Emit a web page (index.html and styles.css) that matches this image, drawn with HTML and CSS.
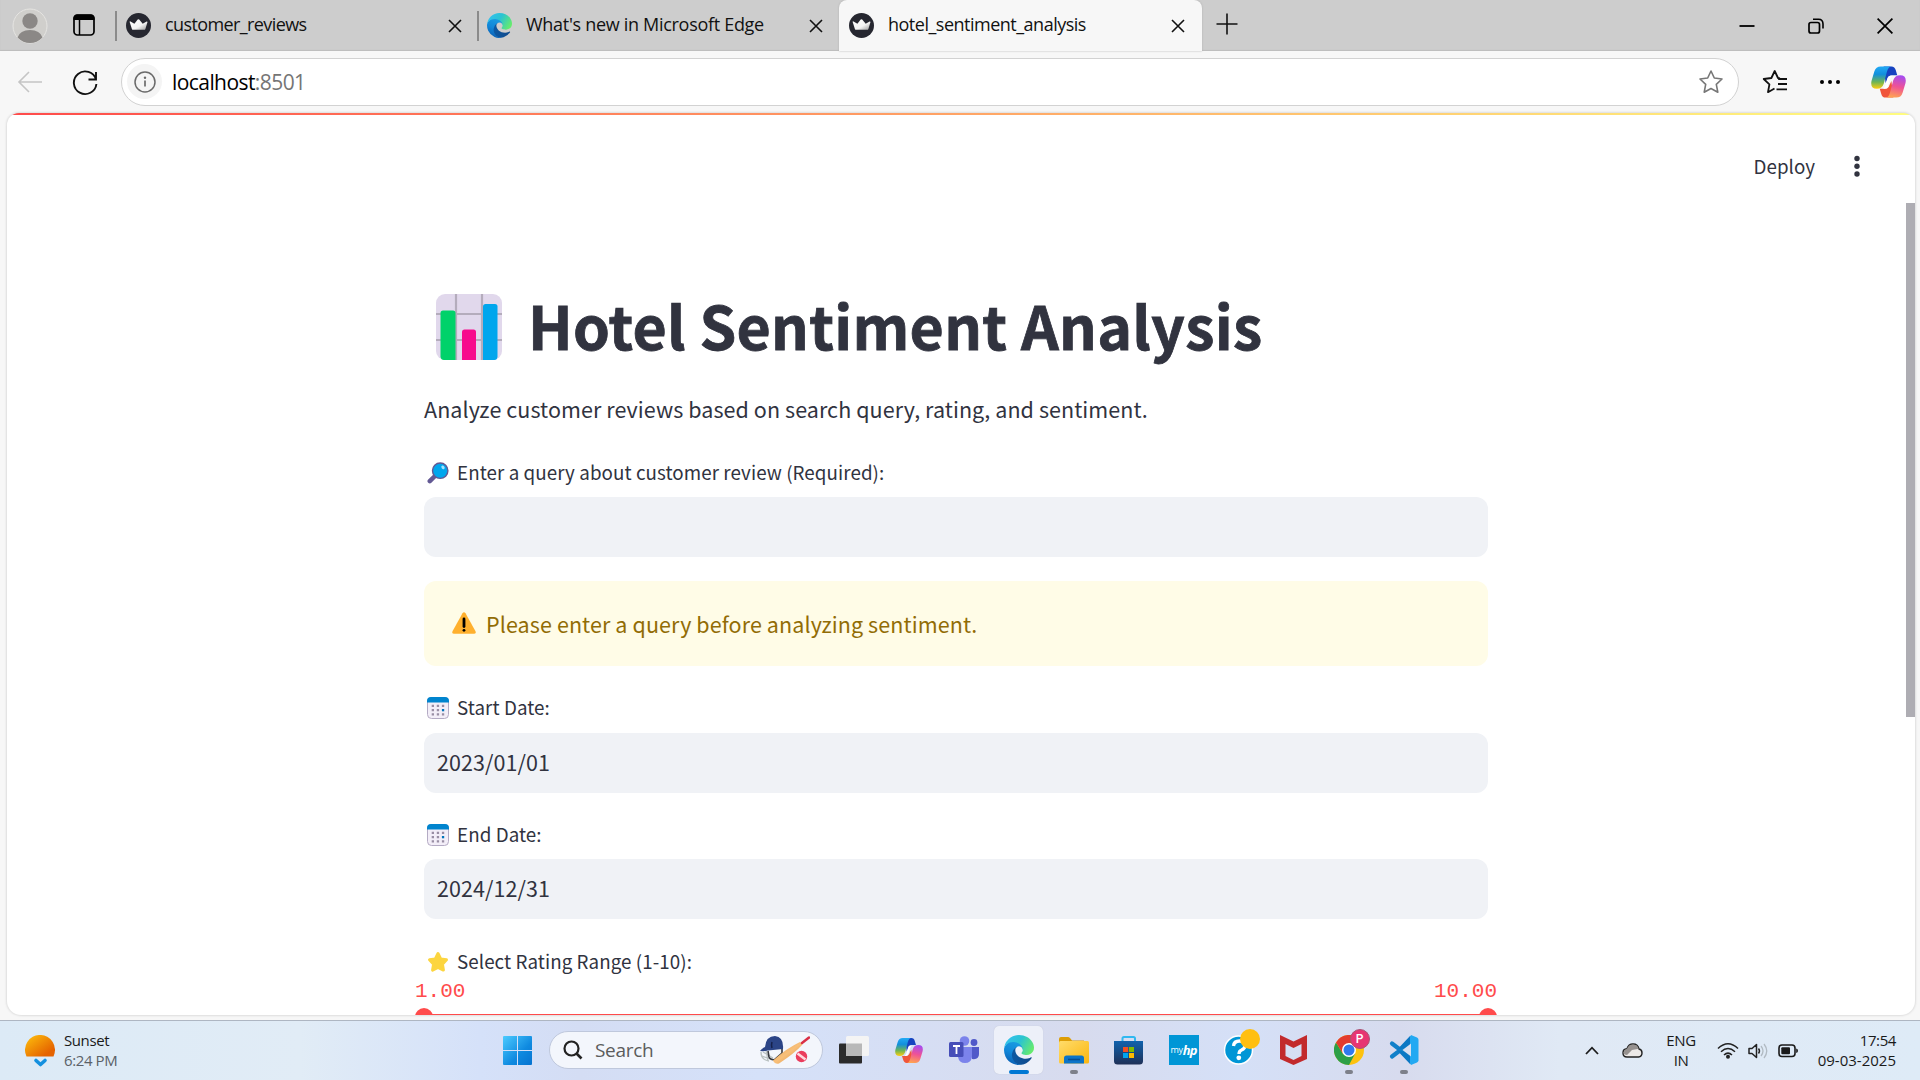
FILE: index.html
```html
<!DOCTYPE html>
<html lang="en">
<head>
<meta charset="utf-8">
<title>hotel_sentiment_analysis</title>
<link rel="stylesheet" href="styles.css">
</head>
<body>
<svg class="defs" width="0" height="0" aria-hidden="true">
  <defs>
    <linearGradient id="edgeDark" x1="0" y1="0" x2="1" y2="0"><stop offset="0" stop-color="#0c59a4"/><stop offset="1" stop-color="#114a8b"/></linearGradient>
    <linearGradient id="edgeBlue" x1=".6" y1="0" x2=".3" y2="1"><stop offset="0" stop-color="#1b9de2"/><stop offset=".5" stop-color="#1187d9"/><stop offset="1" stop-color="#0b5cb0"/></linearGradient>
    <linearGradient id="edgeGreen" x1="0" y1=".2" x2="1" y2=".6"><stop offset="0" stop-color="#35c1f1"/><stop offset=".5" stop-color="#2bc3d2"/><stop offset="1" stop-color="#66eb6e"/></linearGradient>
    <linearGradient id="copLeft" x1="0" y1="0" x2="0" y2="1"><stop offset="0" stop-color="#22aaf5"/><stop offset=".35" stop-color="#128fdc"/><stop offset=".7" stop-color="#6fb553"/><stop offset="1" stop-color="#ffcd0f"/></linearGradient>
    <linearGradient id="copRight" x1=".6" y1="0" x2=".4" y2="1"><stop offset="0" stop-color="#a64cf0"/><stop offset=".5" stop-color="#ef5296"/><stop offset="1" stop-color="#ffa352"/></linearGradient>
    <linearGradient id="crown" x1="0" y1="0" x2="1" y2="1"><stop offset="0" stop-color="#fff"/><stop offset=".6" stop-color="#f4f4f4"/><stop offset="1" stop-color="#999"/></linearGradient>
    <linearGradient id="sun" x1="0" y1="0" x2="1" y2="1"><stop offset=".1" stop-color="#fbb70b"/><stop offset=".8" stop-color="#e56300"/></linearGradient>
    <linearGradient id="win" x1="0" y1="0" x2="1" y2="1"><stop offset="0" stop-color="#4ccbff"/><stop offset=".6" stop-color="#0f8ae0"/><stop offset="1" stop-color="#0673d0"/></linearGradient>
    <linearGradient id="folder" x1="0" y1="0" x2="1" y2="1"><stop offset="0" stop-color="#ffdc6b"/><stop offset="1" stop-color="#fbb60f"/></linearGradient>
    <linearGradient id="store" x1="0" y1="0" x2="0" y2="1"><stop offset="0" stop-color="#0f62ad"/><stop offset="1" stop-color="#1f3057"/></linearGradient>
    <linearGradient id="bat" x1="0" y1="0" x2="1" y2="1"><stop offset="0" stop-color="#e09a50"/><stop offset=".5" stop-color="#f8c07a"/><stop offset="1" stop-color="#d88b40"/></linearGradient>
    <symbol id="edge" viewBox="0 0 256 256">
      <path fill="url(#edgeDark)" d="M231 190.500c-3.400 1.800-6.900 3.400-10.500 4.700a101.800 101.800 0 0 1-35.900 6.400c-47.300 0-88.500-32.500-88.500-74.300a31.500 31.500 0 0 1 16.400-27.300c-42.800 1.800-53.800 46.400-53.800 72.500 0 74 68.100 81.400 82.800 81.400 7.900 0 19.800-2.300 27-4.600l1.300-.4a128.300 128.300 0 0 0 66.600-52.800 4 4 0 0 0-5.400-5.600z"/>
      <path fill="url(#edgeBlue)" d="M105.700 241.400a79.200 79.200 0 0 1-22.700-21.300 80.700 80.700 0 0 1 29.500-120c3.100-1.500 8.500-4.100 15.600-4a32.400 32.400 0 0 1 25.700 13 31.900 31.900 0 0 1 6.300 18.700c0-.2 24.500-79.600-80-79.600-43.900 0-80 41.600-80 78.200a130.200 130.200 0 0 0 12.100 56 128 128 0 0 0 156.400 67 75.500 75.500 0 0 1-62.800-8z"/>
      <path fill="url(#edgeGreen)" d="M152.300 148.900c-.9 1-3.400 2.500-3.400 5.600 0 2.600 1.700 5.200 4.800 7.300 14.300 10 41.400 8.600 41.500 8.600 10.700 0 21.100-2.900 30.300-8.300A61.400 61.400 0 0 0 256 109.300c.2-22.400-8-37.300-11.300-43.900C223.500 24 177.700.1 128 .1A128 128 0 0 0 0 126.400c.5-36.500 36.800-66 80-66 3.500 0 23.500.3 42 10 16.300 8.600 24.900 19 30.800 29.200 6.200 10.700 7.300 24.100 7.300 29.500 0 5.300-2.700 13.300-7.800 19.900z"/>
    </symbol>
    <symbol id="copilot" viewBox="0 0 36 32">
      <path fill="#1643c0" d="M13 0h8q3.500 0 4.500 4l1.500 5h-5q-4 0-5 4l-2 4z"/>
      <path fill="#f0553a" d="M23 32h-8q-3.500 0-4.500-4L9 23h5q4 0 5-4l2-4z"/>
      <path fill="url(#copLeft)" d="M10 0h11q-3 0-4.500 5l-3.300 12.500Q11.500 23 6 23q-7 0-5.500-8L3.500 5Q5 0 10 0z"/>
      <path fill="url(#copRight)" d="M26 32H15q3 0 4.500-5l3.300-12.500Q24.500 9 30 9q7 0 5.500 8l-3 10Q31 32 26 32z"/>
      <path fill="#fff" d="M19.500 9.500H22q-2 1.500-3 5l-1.700 6q-.8 2.500-3.300 2.500h-1.500q1.800-1.500 2.700-5l1.500-5.500q.8-3 2.800-3z"/>
    </symbol>
    <symbol id="streamlit" viewBox="0 0 25 25">
      <circle cx="12.500" cy="12.500" r="12.500" fill="#262730"/>
      <path fill="url(#crown)" d="M3.600 8.800q.1-.7.900-.3l3.900 2.300 3.300-4.200q.8-.7 1.500 0l3.500 4.200 3.900-2.300q.8-.3.900.4l-2.100 7q-.3.900-1.200.9H7.100q-.9 0-1.200-.9z"/>
    </symbol>
    <symbol id="cross" viewBox="0 0 14 14"><path d="M1 1l12 12M13 1L1 13" fill="none" stroke="#111" stroke-width="1.600"/></symbol>
    <symbol id="calendar" viewBox="0 0 22 22">
      <rect x=".5" y=".5" width="21" height="21" rx="4" fill="#f3eef8" stroke="#b4abc4"/>
      <path d="M0 5.500V4q0-4 4-4h14q4 0 4 4v1.500z" fill="#0084ce"/>
      <g fill="#998ea4"><path d="M4.700 7.800h2.300v2.300H4.700zM9.800 7.800h2.300v2.300H9.800zM14.900 7.800h2.300v2.300h-2.300zM4.700 12h2.300v2.300H4.700zM9.800 12h2.300v2.300H9.800zM4.700 16.200h2.300v2.300H4.700zM9.800 16.200h2.300v2.300H9.800zM14.900 16.200h2.300v2.300h-2.300z"/></g>
      <path d="M14.900 12h2.300v2.300h-2.300z" fill="#0074ba"/>
    </symbol>
  </defs>
</svg>

<header class="tabs">
  <div class="tools">
    <svg width="36" height="36" viewBox="0 0 36 36"><circle cx="18" cy="18" r="17" fill="#d0cfcc" stroke="#e6e5e2"/><circle cx="18" cy="13" r="7.700" fill="#8b8886"/><path fill="#8b8886" d="M5.500 29.500Q8 22 18 22t12.500 7.500Q25 35 18 35T5.500 29.500z"/></svg>
    <svg class="spaces" width="24" height="24" viewBox="0 0 24 24"><rect x="2" y="2" width="20" height="20" rx="3.500" fill="none" stroke="#000" stroke-width="1.700"/><path d="M1.500 7V5q0-3.500 3.500-3.500h14q3.500 0 3.500 3.500v2z"/><path d="M7.500 7v15" stroke="#000" stroke-width="1.500"/></svg>
  </div>
  <div class="tab ruled first-tab">
    <svg width="25" height="25"><use href="#streamlit"/></svg>
    <span class="tab-title t1">customer_reviews</span>
    <svg width="14" height="14"><use href="#cross"/></svg>
  </div>
  <div class="tab ruled">
    <svg width="25" height="25"><use href="#edge"/></svg>
    <span class="tab-title t2">What's new in Microsoft Edge</span>
    <svg width="14" height="14"><use href="#cross"/></svg>
  </div>
  <div class="tab active">
    <svg width="25" height="25"><use href="#streamlit"/></svg>
    <span class="tab-title t3">hotel_sentiment_analysis</span>
    <svg width="14" height="14"><use href="#cross"/></svg>
  </div>
  <svg class="plus" width="22" height="22" viewBox="0 0 22 22"><path d="M11 .5v21M.5 11h21" stroke="#111" stroke-width="1.600"/></svg>
  <div class="window-buttons">
    <svg width="16" height="16" viewBox="0 0 16 16"><path d="M.5 8h15" stroke="#000" stroke-width="1.800"/></svg>
    <svg width="16" height="16" viewBox="0 0 16 16"><rect x="1" y="4.500" width="10.500" height="10.500" rx="2" fill="none" stroke="#000" stroke-width="1.700"/><path d="M5 1.200h5.500Q15 1.200 15 6v4.500" fill="none" stroke="#000" stroke-width="1.600"/></svg>
    <svg width="16" height="16" viewBox="0 0 14 14"><path d="M.5.5l13 13M13.500.5l-13 13" stroke="#000" stroke-width="1.500"/></svg>
  </div>
</header>

<nav class="toolbar">
  <svg class="back" width="26" height="24" viewBox="0 0 26 24"><path d="M25 12H2M12 2L2 12l10 10" fill="none" stroke="#c5c5c5" stroke-width="1.600"/></svg>
  <svg class="reload" width="26" height="26" viewBox="0 0 26 26"><path d="M24 9.500A11.300 11.300 0 1 0 24.400 14M24 2v7.500h-7.500" fill="none" stroke="#111" stroke-width="1.900"/></svg>
  <div class="address">
    <span class="info"><svg width="22" height="22" viewBox="0 0 22 22"><circle cx="11" cy="11" r="10" fill="none" stroke="#6a6a6a" stroke-width="1.500"/><path d="M11 9.500v6" stroke="#6a6a6a" stroke-width="1.700"/><circle cx="11" cy="6.700" r="1.200" fill="#6a6a6a"/></svg></span>
    <span class="url">localhost<span class="port">:8501</span></span>
    <svg class="star" width="26" height="26" viewBox="0 0 26 26"><path d="M13 2l3.300 7 7.700 1-5.700 5.300 1.500 7.900L13 19.500l-6.800 3.700 1.500-7.900L2 10l7.700-1z" fill="none" stroke="#777" stroke-width="1.600" stroke-linejoin="round"/></svg>
  </div>
  <svg class="favs" width="26" height="26" viewBox="0 0 26 26"><path d="M18 9.300L16 9l-3.300-7-3.300 7-7.700 1L7.400 15.300 6 23.200l6.500-3.700M16 10h9M16 15h9M14.500 20.300H25" fill="none" stroke="#111" stroke-width="1.800" stroke-linejoin="round"/></svg>
  <svg class="more" width="22" height="6" viewBox="0 0 22 6"><circle cx="3" cy="3" r="2"/><circle cx="11" cy="3" r="2"/><circle cx="19" cy="3" r="2"/></svg>
  <svg class="cop" width="35" height="32"><use href="#copilot"/></svg>
</nav>

<main class="page">
  <div class="app-header">
    <span class="deploy">Deploy</span>
    <svg width="6" height="24" viewBox="0 0 6 24" fill="#31333f"><circle cx="3" cy="4.500" r="2.700"/><circle cx="3" cy="12.200" r="2.700"/><circle cx="3" cy="20" r="2.700"/></svg>
  </div>
  <div class="scroller">
    <div class="content">
      <div class="title-row">
        <svg width="66" height="66" viewBox="0 0 66 66">
          <rect width="66" height="66" rx="9" fill="#e1d8ec"/>
          <path d="M20 0v66M46 0v66M0 20h66M0 46h66" stroke="#b4acbc" stroke-width="2.200"/>
          <path fill="#00d26a" d="M4.500 66V19q0-2.500 2.500-2.500h10q2.500 0 2.500 2.500v47H8q-3 0-3.500-3z"/>
          <path fill="#f70a8d" d="M26 66V38q0-2.500 2.500-2.500h9Q40 35.500 40 38v28z"/>
          <path fill="#00a6ed" d="M47 66V12.500Q47 10 49.500 10h9.500q2.500 0 2.500 2.500V63q-.5 3-3 3z"/>
        </svg>
        <h1>Hotel Sentiment Analysis</h1>
      </div>
      <p class="lead">Analyze customer reviews based on search query, rating, and sentiment.</p>

      <div class="label first">
        <svg width="22" height="22" viewBox="0 0 22 22"><path d="M2.800 19.200L8.500 13.500" stroke="#635994" stroke-width="4.500" stroke-linecap="round"/><circle cx="13.200" cy="8.700" r="7.700" fill="#00a6ed" stroke="#635994" stroke-width="1.400"/><ellipse cx="16" cy="5.400" rx="1.500" ry="2" fill="#a5e4ff" transform="rotate(-35 16 5.400)"/></svg>
        <span>Enter a query about customer review (Required):</span>
      </div>
      <div class="field"></div>

      <div class="alert">
        <svg width="24" height="22" viewBox="0 0 24 22"><path fill="#ffb02e" d="M10.500 1.200Q12-.8 13.500 1.200L23.500 19.300Q24.300 21.700 22 21.700H2Q-.3 21.700.5 19.300z"/><path d="M12 7v7.500" stroke="#000" stroke-width="2.800" stroke-linecap="round"/><circle cx="12" cy="18.300" r="1.400"/></svg>
        <span>Please enter a query before analyzing sentiment.</span>
      </div>

      <div class="label second">
        <svg width="22" height="22"><use href="#calendar"/></svg>
        <span>Start Date:</span>
      </div>
      <div class="field">2023/01/01</div>

      <div class="label third">
        <svg width="22" height="22"><use href="#calendar"/></svg>
        <span>End Date:</span>
      </div>
      <div class="field">2024/12/31</div>

      <div class="label fourth">
        <svg width="22" height="22" viewBox="0 0 22 22"><path d="M11 2.500l2.700 5.400 5.800.9-4.100 4.300 1 6L11 16.500l-5.400 2.600 1-6L2.500 8.800l5.800-.9z" fill="#fcd53f" stroke="#fcd53f" stroke-width="3" stroke-linejoin="round"/></svg>
        <span>Select Rating Range (1-10):</span>
      </div>
      <div class="values"><span>1.00</span><span>10.00</span></div>
      <div class="slider"><i class="thumb"></i><i class="track"></i><i class="thumb"></i></div>
    </div>
    <div class="scrollbar"></div>
  </div>
</main>

<footer class="taskbar">
  <div class="weather">
    <svg width="30" height="32" viewBox="0 0 30 32"><path fill="url(#sun)" d="M1.500 21.500A15 15 0 1 1 28.500 21.500z"/><path d="M11 25.500l4.500 4 4.500-4" fill="none" stroke="#1490df" stroke-width="3.600" stroke-linecap="round" stroke-linejoin="round"/></svg>
    <div class="lines"><span class="w1">Sunset</span><span class="w2">6:24 PM</span></div>
  </div>
  <svg class="start" width="29" height="29" viewBox="0 0 29 29" fill="url(#win)"><path d="M1 0h13v14H0V1q0-1 1-1zM15 0h13q1 0 1 1v13H15zM0 15h14v14H1q-1 0-1-1zM15 15h14v13q0 1-1 1H15z"/></svg>
  <div class="search">
    <svg width="20" height="20" viewBox="0 0 20 20"><circle cx="8.500" cy="8.500" r="7" fill="none" stroke="#222" stroke-width="2.200"/><path d="M13.500 13.500l5 5" stroke="#222" stroke-width="2.600"/></svg>
    <span>Search</span>
    <svg width="50" height="30" viewBox="0 0 50 30">
      <path d="M1 17q0 8 8 9M3 17l10 6M2 21l8 3M6 15l2 11" fill="none" stroke="#b9c1c1" stroke-width="1.300"/>
      <path d="M8 16l1 6q1 3 7 3l4-2M22 13v5l-8 7" fill="none" stroke="#35373d" stroke-width="1.600"/>
      <path d="M0 16Q2 13 5 12Q6 1 15 1q9 1 8 13L8 15.500Q4 16.500 0 16z" fill="#2b4486"/>
      <path d="M12 7q-1 3 0 6" stroke="#16224c" stroke-width="1.500"/>
      <path d="M13 25.500Q27 13 40 7l2.500 2.500Q35 18 19 28.500q-4 1-6-3z" fill="url(#bat)"/>
      <path d="M42 8l7-5.500" stroke="#d92f45" stroke-width="2.500" stroke-linecap="round"/>
      <circle cx="41.500" cy="21.500" r="5.700" fill="#ea3d5d"/><path d="M37.500 18.500l8 6" stroke="#ffd7dc" stroke-width="2.500"/>
    </svg>
  </div>
  <ul class="apps">
    <li><svg width="30" height="28" viewBox="0 0 30 28"><rect y="7.500" width="23" height="20" rx="1" fill="#2b2b2b"/><rect x="7" width="23" height="20" rx="1.500" fill="#f4f4f4"/><path d="M7 7.500h16V20H7z" fill="#b8b8b8"/></svg></li>
    <li><svg width="28" height="25"><use href="#copilot"/></svg></li>
    <li><svg width="30" height="28" viewBox="0 0 30 28">
      <circle cx="15.500" cy="5" r="4.800" fill="#7b83eb"/><circle cx="25" cy="6.500" r="3.400" fill="#5059c9"/><path d="M22 11h8v7q0 6-7 5z" fill="#5059c9"/><path d="M9 11h14v10q-1 6-7 6t-7-6z" fill="#7b83eb"/><rect y="6" width="14.500" height="15" rx="1.500" fill="#464eb8"/><path d="M4 10h7M7.500 10v8" stroke="#fff" stroke-width="1.800"/></svg></li>
    <li class="current"><svg width="30" height="30"><use href="#edge"/></svg><i class="run"></i></li>
    <li><svg width="30" height="27" viewBox="0 0 30 27"><path d="M0 2q0-2 2-2h7q1 0 2 1l2 2.500h12v5H0z" fill="#dd9d05"/><rect y="4" width="30" height="22.500" rx="1.500" fill="url(#folder)"/><path d="M5 26.500V21q0-2.500 2.500-2.500h15Q25 18.500 25 21v5.500z" fill="#0c74c8"/><path d="M9 22.500h12" stroke="#064e93" stroke-width="1.600"/></svg><i class="run"></i></li>
    <li><svg width="29" height="30" viewBox="0 0 29 30"><path d="M8.500 7V3.500Q8.500 2 10 2h9.500Q21 2 21 3.500V7" fill="none" stroke="#30b8f0" stroke-width="2"/><path d="M0 6h29v20q0 3.500-3.500 3.500h-22Q0 29.500 0 26z" fill="url(#store)"/><path d="M9 12h5.200v5H9z" fill="#f25022"/><path d="M15 12h5v5h-5z" fill="#7fba00"/><path d="M9 18h5.200v5H9z" fill="#00a4ef"/><path d="M15 18h5v5h-5z" fill="#ffb900"/></svg></li>
    <li><span class="myhp"><span>my</span><b>hp</b></span></li>
    <li><svg width="30" height="30" viewBox="0 0 30 30"><circle cx="14.500" cy="15" r="14" fill="#0096d6" stroke="#fff" stroke-width="1.500"/><path d="M9.500 11q.5-5 6-5t5.500 4.500q0 3-3.500 4.500-2.500 1-2.500 4" fill="none" stroke="#fff" stroke-width="3.300"/><circle cx="14.800" cy="22.800" r="2.400" fill="#fff"/></svg><i class="badge amber"></i></li>
    <li><svg width="27" height="30" viewBox="0 0 27 30"><path fill="#c22a2c" d="M0 0l13.500 6.500L27 0v24l-13.500 6L0 24zM5.500 9v12l8 4 8-4V9l-8 4z" fill-rule="evenodd"/></svg></li>
    <li><svg width="30" height="30" viewBox="0 0 30 30"><circle cx="15" cy="15" r="15" fill="#fdc20f"/><path d="M2 7.500A15 15 0 0 0 15 30l6.200-11.500L15 15l-6.200 3.500z" fill="#2c9f47"/><path d="M28.300 8A15 15 0 0 0 2 7.500L8.800 18.500 15 8z" fill="#e33b2e"/><circle cx="15" cy="15" r="7" fill="#fff"/><circle cx="15" cy="15" r="5.500" fill="#3079ed"/></svg><i class="badge pink">P</i><i class="run"></i></li>
    <li><svg width="30" height="30" viewBox="0 0 30 30"><path d="M22 7L3 21.500M22 23L3 8.500" stroke="#1180c9" stroke-width="4.200" stroke-linecap="round"/><path d="M8 14.800L21 1l3 2v8zM8 15.200L21 29l3-2v-8z" fill="#0b78c4"/><path d="M22 0l6 2.500q1.500.7 1.500 2.300v20.400q0 1.600-1.500 2.300L22 30l-1-2V2z" fill="#23a9f2"/><path d="M22 8.500v13L13.500 15z" fill="#d9dff0"/></svg><i class="run"></i></li>
  </ul>
  <div class="tray">
    <svg class="up" width="14" height="9" viewBox="0 0 14 9"><path d="M1 8l6-6.300L13 8" fill="none" stroke="#1c1c1c" stroke-width="1.800"/></svg>
    <svg class="cloud" width="21" height="15" viewBox="0 0 21 15"><path d="M5 14Q1 14 1 10t4-4.200Q6.500 1 11 1q5 0 6 5 3 .5 3 4t-3.500 4z" fill="#ece9e7" stroke="#222" stroke-width="1.400"/><path d="M1.500 9.500Q2 6.500 5 5.800 6.500 1.500 11 1.500q4.500 0 5.700 4.300L10 7l-5 5q-3 0-3.500-2.500z" fill="#96918f"/></svg>
    <div class="lines lang"><span>ENG</span><span>IN</span></div>
    <svg class="wifi" width="22" height="18" viewBox="0 0 22 18"><g fill="none" stroke="#222" stroke-width="1.500"><path d="M1 6.500q10-9.500 20 0M4 9.800q7-6.500 14 0M7 13q4-3.800 8 0"/></g><circle cx="11" cy="14.800" r="2" fill="#222"/></svg>
    <svg class="sound" width="20" height="16" viewBox="0 0 20 16"><path d="M1 5.500h3L8.500 1.500v13L4 10.500H1z" fill="none" stroke="#222" stroke-width="1.500" stroke-linejoin="round"/><path d="M10.500 5.500q2 2.500 0 5" fill="none" stroke="#222" stroke-width="1.400"/><path d="M13 3q4 5 0 10M16 1q5.500 7 0 14" fill="none" stroke="#b1bac2" stroke-width="1.300"/></svg>
    <svg class="battery" width="21" height="14" viewBox="0 0 21 14"><rect x="1" y="1" width="16" height="11.500" rx="3" fill="none" stroke="#1a1a1a" stroke-width="1.600"/><rect x="3.300" y="3.300" width="8.700" height="7" rx="1" fill="#1a1a1a"/><path d="M18.200 4.500q1.800.3 1.800 2.300t-1.800 2.300z" fill="#1a1a1a"/></svg>
    <div class="lines clock"><span>17:54</span><span class="date">09-03-2025</span></div>
  </div>
</footer>
</body>
</html>
```
FILE: styles.css
```css
* { box-sizing: border-box; }

body {
  margin: 0;
  width: 1920px;
  height: 1080px;
  overflow: hidden;
  display: flex;
  flex-direction: column;
  background: #f7f7f7;
  color: #31333f;
  font-family: "Noto Sans CJK JP", "Noto Sans", sans-serif;
}

svg { display: block; flex: none; }
.defs { position: absolute; }

/* Browser tab strip */
.tabs {
  height: 51px;
  flex: none;
  display: flex;
  align-items: center;
  background: #cdcdcd;
  box-shadow: inset 0 -1px 1px #bdbdbd;
  color: #111;
  font-family: "Open Sans", "Noto Sans", sans-serif;
  font-size: 18px;
}
.tools { width: 115px; display: flex; gap: 24px; padding-left: 12px; align-items: center; }
.spaces { margin-bottom: 2px; }
.tab { width: 362px; height: 51px; display: flex; align-items: center; padding: 0 16px 0 10px; }
.first-tab { padding: 0 15px 0 11px; }
.ruled { background: linear-gradient(#8b8b8b, #8b8b8b) 0 11px / 2px 30px no-repeat; }
.active {
  width: 363px;
  background: #f7f7f7;
  border-radius: 8px 8px 0 0;
  box-shadow: 0 0 2px #aaa;
  padding-right: 17px;
}
.tab-title { flex: 1; margin: 0 0 3px 14px; white-space: nowrap; line-height: 24px; }
.t1 { letter-spacing: -0.6px; }
.t2 { letter-spacing: -0.3px; }
.t3 { letter-spacing: -0.5px; }
.plus { margin: 0 0 3px 14px; }
.window-buttons { margin-left: auto; margin-right: 27px; display: flex; gap: 53px; }

/* Address row */
.toolbar { height: 62px; flex: none; display: flex; align-items: center; padding: 0 0 1px 17px; }
.reload { margin-left: 29px; margin-top: 2px; }
.address {
  width: 1618px;
  height: 48px;
  margin-left: 23px;
  border: 1.5px solid #d2d2d2;
  border-radius: 24px;
  background: #fff;
  display: flex;
  align-items: center;
  padding: 0 14px 0 5px;
}
.info { width: 35px; height: 35px; border-radius: 50%; background: #f4f4f4; display: grid; place-items: center; }
.url { margin-left: 10px; font: 21px/28px "Open Sans", sans-serif; color: #000; letter-spacing: -0.57px; }
.port { color: #757575; }
.star { margin-left: auto; }
.favs { margin-left: 23px; }
.more { margin-left: 31px; }
.cop { margin-left: 30px; }

/* Web page */
.page {
  height: 902px;
  flex: none;
  margin: 0 5px 0 7px;
  background: linear-gradient(90deg, #ff4b4b, #fffd80) 0 0 / 100% 2px no-repeat, #fff;
  border-radius: 12px 12px 14px 14px;
  box-shadow: 0 0 2px 1px #dedede;
  overflow: hidden;
}
.app-header { height: 90px; padding: 15px 55px 0 0; display: flex; justify-content: flex-end; align-items: center; gap: 39px; }
.deploy { font-size: 18.800px; line-height: 30px; }
.scroller { height: 812px; display: flex; }
.content { width: 1064px; margin-left: 417px; flex: none; }
.scrollbar { width: 9px; height: 514px; margin-left: auto; background: #aeadb3; }

.title-row { height: 92px; margin-top: 77px; padding-left: 12px; display: flex; align-items: center; gap: 26px; }
.title-row svg { margin-top: 1px; }
h1 {
  margin: -2px 0 0;
  font-size: 59px;
  line-height: 92px;
  font-weight: 700;
  letter-spacing: 0.26px;
  white-space: nowrap;
  -webkit-text-stroke: 0.8px #31333f;
}
.lead { margin: 19px 0 0; font-size: 21.500px; line-height: 36px; letter-spacing: 0.07px; }
.label { height: 32px; margin-bottom: 8px; padding-left: 3px; display: flex; align-items: center; gap: 8px; font-size: 18.800px; line-height: 32px; letter-spacing: 0.07px; }
.label span { margin-top: -2px; }
.first { margin-top: 30px; }
.second { margin-top: 27px; }
.second svg { margin-top: -3px; }
.second span { margin-top: -4px; }
.third { margin-top: 26px; }
.third svg { margin-top: -1px; }
.fourth { margin: 27px 0 0; }
.field { height: 60px; padding-left: 13px; border-radius: 12px; background: #f0f2f6; font-size: 21.500px; line-height: 58px; letter-spacing: 0.07px; }
.alert {
  height: 85px;
  margin-top: 24px;
  padding: 0 0 1px 28px;
  display: flex;
  align-items: center;
  gap: 10px;
  border-radius: 12px;
  background: #fffce7;
  color: #926c05;
  font-size: 21.500px;
  letter-spacing: 0.1px;
}
.values {
  margin: 0 -9px;
  display: flex;
  justify-content: space-between;
  color: #ff4b4b;
  font: 21px/28px "Liberation Mono", monospace;
}
.slider { display: flex; align-items: center; margin: 2px -9px 0; height: 18px; }
.thumb { width: 18px; height: 18px; border-radius: 50%; background: #ff4b4b; }
.track { flex: 1; height: 1px; margin: -5px -2px 0; background: #ff4b4b; }

/* Desktop taskbar */
.taskbar {
  height: 60px;
  margin-top: 5px;
  flex: none;
  display: flex;
  align-items: center;
  border-top: 1px solid #aeb6c2;
  background: linear-gradient(90deg, #dceaf6 0, #e1ecf6 300px, #d5e1f9 480px, #d4ddf4 580px, #d5e1f9 760px, #d7dbee 1080px, #d5e0f7 1240px, #d7dbee 1400px, #e0e9f5 1560px, #deebf7 1920px);
  font: 15px/20px "Open Sans", "Noto Sans", sans-serif;
  color: #1a1a1a;
}
.weather { width: 503px; padding-left: 25px; display: flex; gap: 9px; align-items: center; }
.lines { display: flex; flex-direction: column; letter-spacing: -0.4px; white-space: nowrap; padding-bottom: 2px; }
.w2 { color: #5b6168; }
.search {
  width: 274px;
  height: 38px;
  margin: 0 0 1px 17px;
  padding: 0 12px 0 13px;
  display: flex;
  align-items: center;
  border: 1px solid #bfc8dc;
  border-radius: 19px;
  background: #f3f6fc;
  color: #5c5c5c;
  font-size: 19px;
}
.search span { margin: 0 auto 0 12px; letter-spacing: -0.3px; }
.apps { list-style: none; margin: 0 0 1px 3px; padding: 0; display: flex; }
.apps li { width: 55px; height: 48px; display: flex; align-items: center; justify-content: center; position: relative; }
.current::before { content: ""; position: absolute; inset: 0 3px; border-radius: 5px; background: #edf0f9; box-shadow: 0 0 1px #b8bccb; }
.current svg { position: relative; }
.run { position: absolute; left: 23.500px; bottom: 0; width: 8px; height: 4px; border-radius: 2px; background: #7d808a; }
.current .run { left: 17.500px; width: 20px; background: #0078d4; }
.badge { position: absolute; left: 28.500px; top: 3px; width: 20px; height: 20px; border-radius: 50%; font: 500 12px/20px Roboto, sans-serif; text-align: center; color: #fff; }
.amber { background: #ffbf10; }
.pink { background: #e73572; border: 1px solid #a95475; line-height: 18px; }
.myhp { width: 30px; height: 30px; background: #0096d6; color: #fff; display: flex; align-items: center; justify-content: center; font-size: 9px; letter-spacing: -0.3px; }
.myhp b { font-size: 13px; font-style: italic; letter-spacing: -1px; }
.tray { margin-left: auto; margin-right: 24px; display: flex; align-items: center; }
.cloud { margin-left: 23px; }
.lang { width: 30px; margin-left: 23px; align-items: center; }
.wifi { margin-left: 21px; }
.sound { margin-left: 9px; }
.battery { margin-left: 10px; }
.clock { width: 97px; align-items: flex-end; }
.date { letter-spacing: 0; }
```
